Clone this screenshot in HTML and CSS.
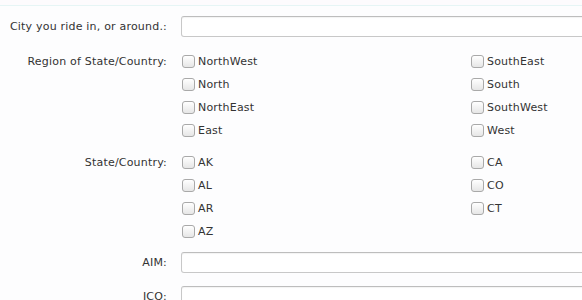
FILE: index.html
```html
<!DOCTYPE html>
<html lang="en">

<head>
    <meta charset="UTF-8">
    <meta name="viewport" content="width=device-width, initial-scale=1.0">
    <title>Rider Profile</title>
    <link rel="stylesheet" href="styles.css">
</head>

<body>
    <div class="topbar"></div>
    <form class="profile">
        <div class="row row-city">
            <label class="field-label" for="city">City you ride in, or around.:</label>
            <div class="field"><input type="text" id="city" name="city"></div>
        </div>
        <div class="row row-region">
            <span class="field-label">Region of State/Country:</span>
            <div class="checks">
                <label><input type="checkbox" name="region" value="nw"> NorthWest</label>
                <label><input type="checkbox" name="region" value="n"> North</label>
                <label><input type="checkbox" name="region" value="ne"> NorthEast</label>
                <label><input type="checkbox" name="region" value="e"> East</label>
                <label><input type="checkbox" name="region" value="se"> SouthEast</label>
                <label><input type="checkbox" name="region" value="s"> South</label>
                <label><input type="checkbox" name="region" value="sw"> SouthWest</label>
                <label><input type="checkbox" name="region" value="w"> West</label>
            </div>
        </div>
        <div class="row row-state">
            <span class="field-label">State/Country:</span>
            <div class="checks">
                <label><input type="checkbox" name="state" value="AK"> AK</label>
                <label><input type="checkbox" name="state" value="AL"> AL</label>
                <label><input type="checkbox" name="state" value="AR"> AR</label>
                <label><input type="checkbox" name="state" value="AZ"> AZ</label>
                <label><input type="checkbox" name="state" value="CA"> CA</label>
                <label><input type="checkbox" name="state" value="CO"> CO</label>
                <label><input type="checkbox" name="state" value="CT"> CT</label>
            </div>
        </div>
        <div class="row row-aim">
            <label class="field-label" for="aim">AIM:</label>
            <div class="field"><input type="text" id="aim" name="aim"></div>
        </div>
        <div class="row row-icq">
            <label class="field-label" for="icq">ICQ:</label>
            <div class="field"><input type="text" id="icq" name="icq"></div>
        </div>
    </form>
</body>

</html>
```

FILE: styles.css
```css
html,
body {
    margin: 0;
    padding: 0;
    overflow: hidden;
}

body {
    font-family: "DejaVu Sans", Verdana, sans-serif;
    font-size: 11px;
    letter-spacing: 0.2px;
    color: #333;
    background-color: #fdfdfe;
}

.topbar {
    height: 5px;
    background-color: #fdfbfd;
    border-bottom: 1px solid #e6f5f5;
}

.profile {
    padding-top: 10px;
}

.row {
    display: grid;
    grid-template-columns: 167px 1fr;
    column-gap: 14px;
}

.row-city {
    margin-bottom: 13px;
}

.row-region,
.row-state {
    margin-bottom: 9px;
}

.row-aim {
    margin-bottom: 13px;
}

.field-label {
    text-align: right;
    line-height: 23px;
}

.row-city .field-label,
.row-aim .field-label,
.row-icq .field-label {
    line-height: 21px;
}

.field input {
    display: block;
    width: 520px;
    height: 21px;
    box-sizing: border-box;
    border: 1px solid #c8c8c8;
    border-top-color: #bdbdbd;
    border-radius: 3px;
    background-color: #fff;
    box-shadow: inset 0 1px 1px rgba(0, 0, 0, 0.05);
    margin: 0;
}

.checks {
    display: grid;
    grid-template-columns: 289px 1fr;
    grid-template-rows: repeat(4, 23px);
    grid-auto-flow: column;
}

.checks label {
    display: flex;
    align-items: center;
    gap: 3px;
    white-space: nowrap;
}

.checks input {
    appearance: none;
    -webkit-appearance: none;
    width: 13px;
    height: 13px;
    margin: 0 0 0 1px;
    border: 1px solid #a9a9a9;
    border-radius: 3px;
    background: linear-gradient(#ffffff, #e6e6e6);
    box-sizing: border-box;
}
```
